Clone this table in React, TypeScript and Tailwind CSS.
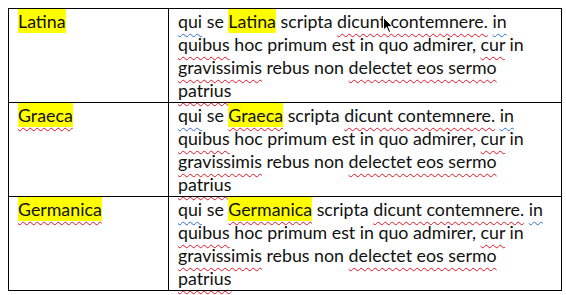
const red = 'underline decoration-wavy decoration-[#e81123] decoration-1 underline-offset-[5px]';
const blue = 'underline decoration-wavy decoration-[#2b6fd6] decoration-1 underline-offset-[5px]';

const rows = [
  { name: 'Latina', marked: false },
  { name: 'Graeca', marked: true },
  { name: 'Germanica', marked: true },
];

const Name = ({ name, marked }: { name: string; marked: boolean }) => (
  <span className={`bg-[#ffff00] py-[1px] ${marked ? red : ''}`}>{name}</span>
);

const Body = ({ name, marked }: { name: string; marked: boolean }) => (
  <>
    <span className={blue}>qui</span> se <Name name={name} marked={marked} /> scripta{' '}
    <span className={red}>dicunt contemnere.</span> <span className={blue}>in</span>
    <br />
    <span className={red}>quibus</span> hoc primum est in quo admirer, <span className={red}>cur</span> in
    <br />
    <span className={red}>gravissimis</span> rebus non <span className={red}>delectet eos sermo</span>
    <br />
    <span className={red}>patrius</span>
  </>
);

export default function App() {
  return (
    <div className="relative w-[566px] h-[295px] bg-white pt-[8px] pl-[8px] text-[#111] font-['Lato',sans-serif] text-[17.8px] leading-[23px]">
      <table className="border-collapse">
        <tbody>
          {rows.map((r) => (
            <tr key={r.name} className="h-[94px]">
              <td className="w-[160px] border border-black align-top pl-[9px] pt-[1px]">
                <Name name={r.name} marked={r.marked} />
              </td>
              <td className="w-[393px] border border-black align-top pl-[9px] pt-[1px] whitespace-nowrap">
                <Body name={r.name} marked={r.marked} />
              </td>
            </tr>
          ))}
        </tbody>
      </table>
      <svg className="absolute left-[383px] top-[17px]" width="11" height="17" viewBox="0 0 11 17">
        <path d="M0.5 0.5 L0.5 13 L3.5 10.2 L5.8 15.5 L7.6 14.7 L5.4 9.6 L9.5 9.6 Z" fill="#000" stroke="#fff" strokeWidth="1" />
      </svg>
    </div>
  );
}
